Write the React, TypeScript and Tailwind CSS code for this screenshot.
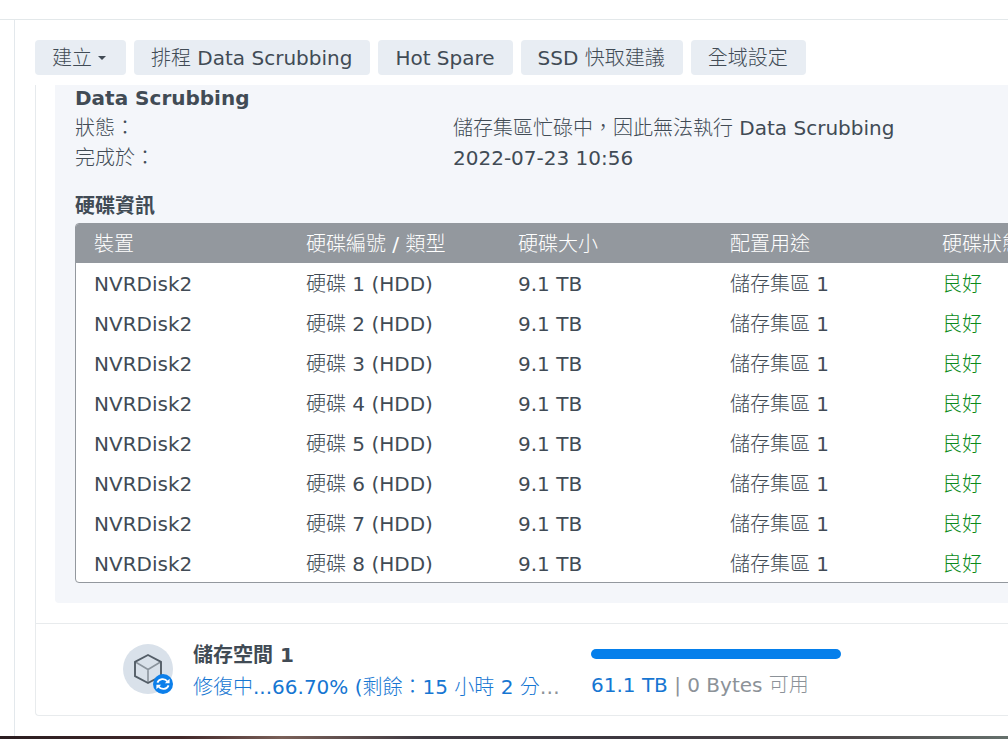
import type { ReactNode } from 'react';

const disks = [1, 2, 3, 4, 5, 6, 7, 8];
const columns = ['裝置', '硬碟編號 / 類型', '硬碟大小', '配置用途', '硬碟狀態'];

function ToolButton({ children }: { children: ReactNode }) {
  return (
    <button
      type="button"
      className="flex h-[35px] shrink-0 items-center rounded-[4px] bg-[#e8edf3] pr-[18px] pl-[17px] whitespace-nowrap"
    >
      {children}
    </button>
  );
}

function VolumeIcon() {
  return (
    <svg viewBox="0 0 50 50" className="mt-5 size-[50px] shrink-0" aria-hidden="true">
      <circle cx="25" cy="25" r="25" fill="#d9e1ea" />
      <g fill="none" strokeLinejoin="round" strokeLinecap="round">
        <path d="M12.5 18 L25 25.5 L37.5 18 M25 25.5 V38" stroke="#8b949d" strokeWidth="1.6" />
        <path d="M25 11 L38 17.8 V32.2 L25 39 L12 32.2 V17.8 Z" stroke="#535d67" strokeWidth="1.9" />
      </g>
      <circle cx="40" cy="40" r="10" fill="#0c7fea" />
      <g fill="none" stroke="#fff" strokeWidth="1.8">
        <path d="M34.4 38.6 A5.6 5.2 0 0 1 44.4 37.4" />
        <path d="M45.6 41.4 A5.6 5.2 0 0 1 35.6 42.6" />
      </g>
      <path d="M46.6 34.8 V39.2 H41.8 Z M33.4 45.2 V40.8 H38.2 Z" fill="#fff" />
    </svg>
  );
}

export default function App() {
  return (
    <div
      lang="zh-Hant"
      className="flex min-h-screen flex-col overflow-x-hidden bg-white font-['DejaVu_Sans','Noto_Sans_CJK_TC_Light','Noto_Sans_CJK_TC',sans-serif] text-[20px] leading-[30px] text-[#414b55]"
    >
      <header className="h-5 border-b border-[#e3e8ea]" />
      <div className="flex flex-1">
        <aside className="w-[15px] shrink-0 border-r border-[#e3e8ec]" />
        <main className="min-w-0 flex-1 pt-5 pb-5 pl-5">
          <nav className="flex gap-2">
            <ToolButton>
              建立
              <svg viewBox="0 0 8 4" className="mr-[2px] ml-[6px] h-1 w-2" aria-hidden="true">
                <path d="M0 0 H8 L4 4 Z" fill="#414b55" />
              </svg>
            </ToolButton>
            <ToolButton>排程 Data Scrubbing</ToolButton>
            <ToolButton>Hot Spare</ToolButton>
            <ToolButton>SSD 快取建議</ToolButton>
            <ToolButton>全域設定</ToolButton>
          </nav>

          <div className="mt-[10px] border-l border-[#e6eaed] pb-5 pl-[19px]">
            <section className="rounded-bl-[4px] bg-[#f4f6fa] pb-5 pl-5">
              <h2 className="h-7 font-['DejaVu_Sans','Noto_Sans_CJK_TC',sans-serif] font-bold leading-[26px]">Data Scrubbing</h2>
              <dl className="grid grid-cols-[378px_1fr] whitespace-nowrap">
                <dt>狀態：</dt>
                <dd>儲存集區忙碌中，因此無法執行 Data Scrubbing</dd>
                <dt>完成於：</dt>
                <dd>2022-07-23 10:56</dd>
              </dl>
              <h2 className="mt-[18px] pb-[2px] font-['DejaVu_Sans','Noto_Sans_CJK_TC',sans-serif] font-bold">硬碟資訊</h2>
              <div className="w-[1062px] overflow-hidden rounded-[4px] border border-[#93989e] bg-white">
                <table className="w-full table-fixed border-collapse text-left">
                  <thead>
                    <tr className="h-[39px] bg-[#93989e] text-white">
                      {columns.map((name) => (
                        <th key={name} scope="col" className="p-0 pl-[18px] font-normal whitespace-nowrap">
                          {name}
                        </th>
                      ))}
                    </tr>
                  </thead>
                  <tbody>
                    {disks.map((n) => (
                      <tr key={n} className="h-10 last:h-[39px]">
                        <td className="p-0 pt-[2px] pl-[18px]">NVRDisk2</td>
                        <td className="p-0 pt-[2px] pl-[18px]">硬碟 {n} (HDD)</td>
                        <td className="p-0 pt-[2px] pl-[18px]">9.1 TB</td>
                        <td className="p-0 pt-[2px] pl-[18px]">儲存集區 1</td>
                        <td className="p-0 pt-[2px] pl-[18px] text-[#0a8a1a]">良好</td>
                      </tr>
                    ))}
                  </tbody>
                </table>
              </div>
            </section>
          </div>

          <section className="flex h-[93px] items-start rounded-bl-[4px] border border-r-0 border-[#e8ebed] pl-[87px]">
            <VolumeIcon />
            <div className="mt-4 ml-5 w-[373px] shrink-0">
              <h3 className="font-['DejaVu_Sans','Noto_Sans_CJK_TC',sans-serif] font-bold">儲存空間 1</h3>
              <p className="mt-[2px] truncate text-[#8c9298]">
                <span className="text-[#1676d2]">修復中...66.70% (剩餘：15 小時 2 分鐘)</span>
              </p>
            </div>
            <div className="mt-[25px] ml-[25px] w-[250px] shrink-0">
              <div
                role="progressbar"
                aria-label="已使用容量"
                aria-valuenow={100}
                className="h-[10px] rounded-full bg-[#057feb]"
              />
              <p className="mt-[11px] whitespace-nowrap text-[#8c9298]">
                <span className="text-[#1676d2]">61.1 TB</span> | 0 Bytes 可用
              </p>
            </div>
          </section>
        </main>
      </div>
      <footer className="h-[3px] bg-[linear-gradient(90deg,#2a1d20,#43282a_18%,#7a6058_28%,#3f3a42_42%,#3d3840_62%,#4d4648_84%,#65706c)]" />
    </div>
  );
}
